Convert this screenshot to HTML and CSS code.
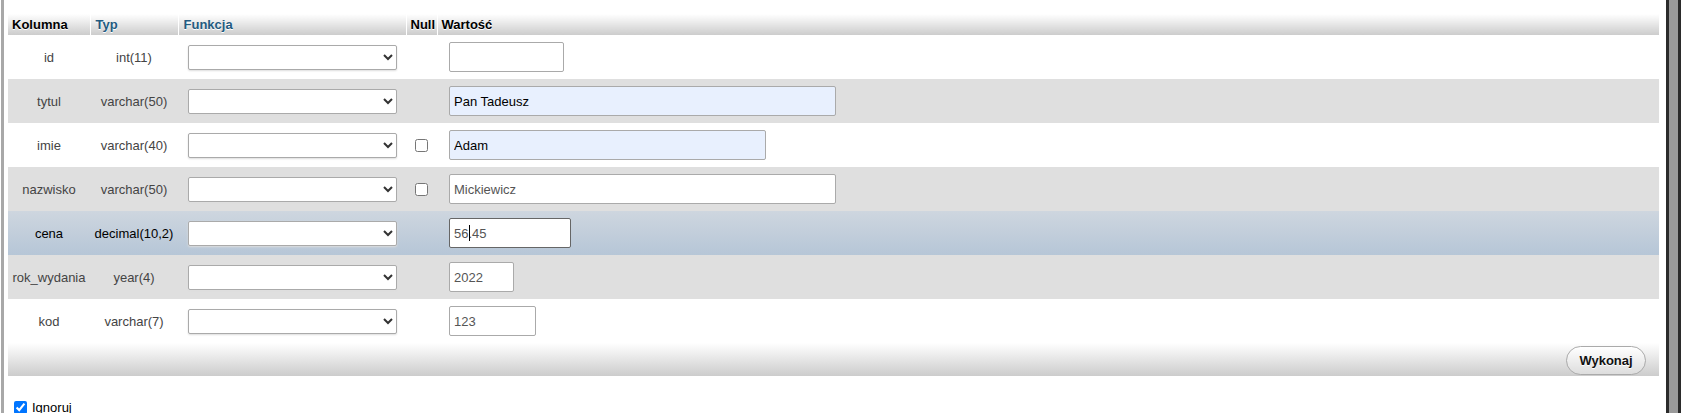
FILE: index.html
```html
<!DOCTYPE html>
<html lang="pl">
<head>
<meta charset="utf-8">
<title>Wstaw</title>
<link rel="stylesheet" href="styles.css">
</head>
<body>
<div class="frame">
  <div class="lbar"></div>
  <div class="main">
    <table class="insert">
      <colgroup>
        <col class="c-col"><col class="c-typ"><col class="c-fn"><col class="c-null"><col class="c-val">
      </colgroup>
      <thead>
        <tr>
          <th>Kolumna</th>
          <th class="link">Typ</th>
          <th class="link">Funkcja</th>
          <th>Null</th>
          <th>Wartość</th>
        </tr>
      </thead>
      <tbody>
        <tr class="odd">
          <td class="name">id</td>
          <td class="type">int(11)</td>
          <td class="fn"><select class="sel"><option></option></select></td>
          <td class="nul"></td>
          <td class="val"><input class="txt w-id" type="text" value=""></td>
        </tr>
        <tr class="even">
          <td class="name">tytul</td>
          <td class="type">varchar(50)</td>
          <td class="fn"><select class="sel"><option></option></select></td>
          <td class="nul"></td>
          <td class="val"><input class="txt auto w-long" type="text" value="Pan Tadeusz"></td>
        </tr>
        <tr class="odd">
          <td class="name">imie</td>
          <td class="type">varchar(40)</td>
          <td class="fn"><select class="sel"><option></option></select></td>
          <td class="nul"><input class="cb" type="checkbox"></td>
          <td class="val"><input class="txt auto w-imie" type="text" value="Adam"></td>
        </tr>
        <tr class="even">
          <td class="name">nazwisko</td>
          <td class="type">varchar(50)</td>
          <td class="fn"><select class="sel"><option></option></select></td>
          <td class="nul"><input class="cb" type="checkbox"></td>
          <td class="val"><input class="txt w-long" type="text" value="Mickiewicz"></td>
        </tr>
        <tr class="hover">
          <td class="name">cena</td>
          <td class="type">decimal(10,2)</td>
          <td class="fn"><select class="sel"><option></option></select></td>
          <td class="nul"></td>
          <td class="val"><span class="focuswrap"><input class="txt focus w-cena" type="text" value="56.45"><i class="caret"></i></span></td>
        </tr>
        <tr class="even">
          <td class="name">rok_wydania</td>
          <td class="type">year(4)</td>
          <td class="fn"><select class="sel"><option></option></select></td>
          <td class="nul"></td>
          <td class="val"><input class="txt w-rok" type="text" value="2022"></td>
        </tr>
        <tr class="odd">
          <td class="name">kod</td>
          <td class="type">varchar(7)</td>
          <td class="fn"><select class="sel"><option></option></select></td>
          <td class="nul"></td>
          <td class="val"><input class="txt w-kod" type="text" value="123"></td>
        </tr>
      </tbody>
    </table>
    <div class="footer">
      <button class="btn" type="button">Wykonaj</button>
    </div>
    <label class="ignore"><input class="cb-ign" type="checkbox" checked> Ignoruj</label>
  </div>
  <div class="rbar"></div>
</div>
</body>
</html>
```

FILE: styles.css
```css
* { box-sizing: border-box; }

html, body {
  margin: 0;
  padding: 0;
  background: #fff;
}

body {
  font-family: "Liberation Sans", Arial, sans-serif;
  font-size: 13px;
  color: #444;
}

.frame {
  display: flex;
  height: 413px;
  overflow: hidden;
}

.lbar {
  width: 3px;
  margin-left: 1px;
  background: #a8a8a8;
  flex: none;
}

.main {
  flex: 1;
  padding: 14px 7px 0 4px;
  min-width: 0;
}

.rbar {
  flex: none;
  width: 15px;
  background: #9a9a9a;
  border-left: 3px solid #2b2b2b;
  border-right: 3px solid #2b2b2b;
}

.insert {
  width: 100%;
  border-collapse: collapse;
  table-layout: fixed;
}

.c-col { width: 82px; }
.c-typ { width: 88px; }
.c-fn { width: 228px; }
.c-null { width: 31px; }

.insert th {
  height: 21px;
  padding: 0 4px 0 4px;
  text-align: left;
  font-weight: bold;
  color: #000;
  text-shadow: 0 1px 0 #fff;
  background: linear-gradient(#fff, #ccc);
  border-right: 1px solid #fff;
  white-space: nowrap;
}

.insert th:first-child { padding-left: 4px; }
.insert th.link { color: #235a81; padding-left: 5px; }
.insert th:last-child { border-right: 0; }

.insert td {
  height: 44px;
  padding: 0;
  vertical-align: middle;
  white-space: nowrap;
}

tr.odd td { background: #fff; }
tr.even td { background: #dfdfdf; }
tr.hover td { background: linear-gradient(#ced6df, #b6c6d7); color: #000; }

td.name, td.type { text-align: center; }
td.fn { text-align: center; font-size: 0; }
td.nul { text-align: center; font-size: 0; }
td.val { padding-left: 12px; font-size: 0; }

.sel {
  width: 209px;
  height: 25px;
  margin: 0;
  border: 1px solid #aaa;
  border-radius: 2px;
  background: #fff;
  color: #333;
  font-family: "Liberation Sans", Arial, sans-serif;
  font-size: 13px;
  box-shadow: 0 1px 2px #ddd;
  vertical-align: middle;
}

.cb {
  width: 13px;
  height: 13px;
  margin: 0;
  vertical-align: middle;
}

.txt {
  height: 30px;
  margin: 0;
  padding: 0 4px;
  border: 1px solid #aaa;
  border-radius: 2px;
  background: #fff;
  color: #555;
  font-family: "Liberation Sans", Arial, sans-serif;
  font-size: 13px;
  vertical-align: middle;
  outline: none;
}

.txt.auto { background: #e8f0fe; color: #000; }
.txt.focus { border-color: #666; }

.w-id { width: 115px; }
.w-long { width: 387px; }
.w-imie { width: 317px; }
.w-cena { width: 122px; }
.w-rok { width: 65px; }
.w-kod { width: 87px; }

.focuswrap {
  position: relative;
  display: inline-block;
  vertical-align: middle;
  font-size: 0;
}

.caret {
  position: absolute;
  left: 20px;
  top: 7px;
  width: 1px;
  height: 16px;
  background: #000;
}

.footer {
  height: 33px;
  background: linear-gradient(#fff, #ccc);
  display: flex;
  align-items: center;
  justify-content: flex-end;
  padding-right: 13px;
}

.btn {
  height: 29px;
  width: 80px;
  padding: 0 7px;
  border: 1px solid #aaa;
  border-radius: 20px;
  background: linear-gradient(#fff, #ddd);
  color: #111;
  font-family: "Liberation Sans", Arial, sans-serif;
  font-size: 13px;
  font-weight: bold;
  text-shadow: 0 1px 0 #fff;
  margin-top: 1px;
}

.ignore {
  display: flex;
  align-items: center;
  gap: 5px;
  margin: 25px 0 0 6px;
  color: #000;
  font-size: 13px;
  line-height: 13px;
}

.cb-ign {
  width: 13px;
  height: 13px;
  margin: 0;
}
```
